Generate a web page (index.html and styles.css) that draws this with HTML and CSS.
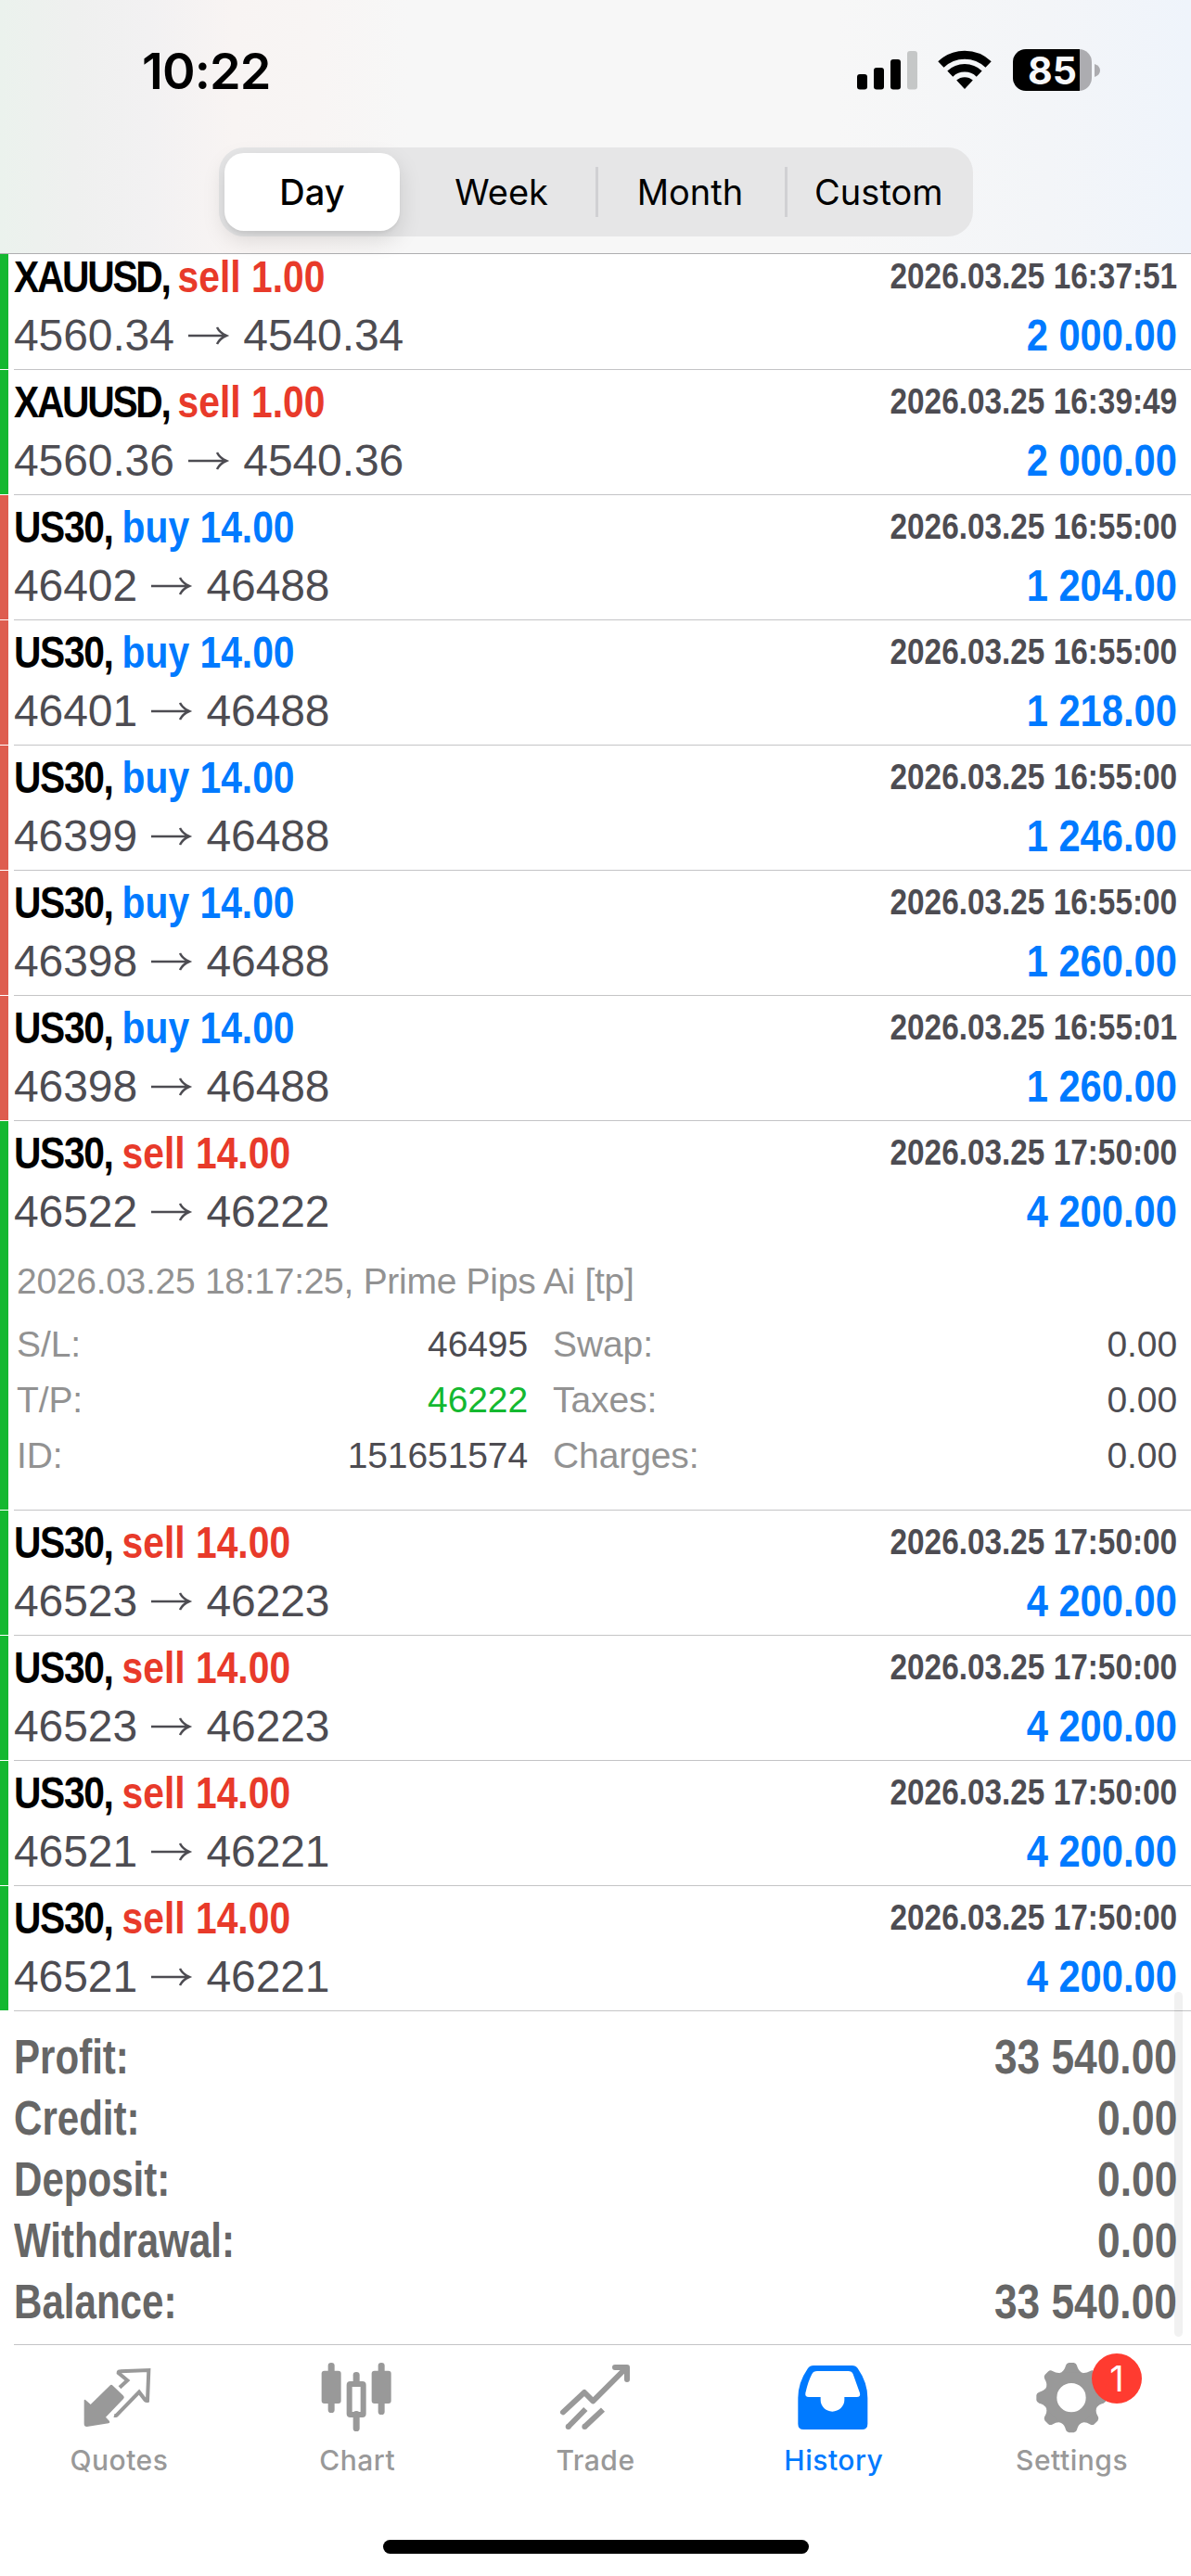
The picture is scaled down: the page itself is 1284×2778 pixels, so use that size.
FILE: index.html
```
<!DOCTYPE html>
<html lang="en">
<head>
  <meta charset="UTF-8">
  <title>History</title>
  <link rel="stylesheet" href="styles.css">
</head>
<body>

<header class="header">
  <div class="status-bar">
    <span class="clock">10:22</span>
    <div class="status-icons">
      <svg class="signal" viewBox="0 0 66 42">
        <rect x="0" y="25" width="11" height="16.5" rx="3"/>
        <rect x="18" y="18" width="11" height="23.5" rx="3"/>
        <rect x="36" y="9" width="11" height="32.5" rx="3"/>
        <rect x="54" y="0" width="11" height="41.5" rx="3" fill="#c5c7c7"/>
      </svg>
      <svg class="wifi" viewBox="0 0 58 42">
        <path d="M3.4 15.5A37 37 0 0 1 54.6 15.5" fill="none" stroke="#000" stroke-width="9"/>
        <path d="M13.3 25.6A22.7 22.7 0 0 1 44.7 25.6" fill="none" stroke="#000" stroke-width="8.6"/>
        <path d="M20.2 32.6A13 13 0 0 1 37.8 32.6L29 42z"/>
      </svg>
      <div class="battery"><span class="battery-level">85</span></div>
      <svg class="battery-nub" viewBox="0 0 6 14"><path d="M0 0Q6 2 6 7T0 14z" fill="#acacb0"/></svg>
    </div>
  </div>
  <div class="segments">
    <div class="segment active">Day</div>
    <div class="segment">Week</div>
    <div class="segment">Month</div>
    <div class="segment">Custom</div>
  </div>
</header>

<svg class="defs">
  <symbol id="arrow" viewBox="0 0 48 34">
    <path d="M2 18H42M33 9Q36 15 43 18Q36 21 33 27" fill="none" stroke="#4d4c52" stroke-width="2.5"/>
  </symbol>
</svg>

<main class="history">
  <ul class="trades">
    <li class="trade won">
      <div class="trade-body">
        <div class="line"><b class="title"><span class="metal">XAUUSD, </span><span class="sell">sell 1.00</span></b><b class="date">2026.03.25 16:37:51</b></div>
        <div class="line"><span class="prices">4560.34 <svg><use href="#arrow"/></svg> 4540.34</span><b class="profit">2 000.00</b></div>
      </div>
    </li>
    <li class="trade won">
      <div class="trade-body">
        <div class="line"><b class="title"><span class="metal">XAUUSD, </span><span class="sell">sell 1.00</span></b><b class="date">2026.03.25 16:39:49</b></div>
        <div class="line"><span class="prices">4560.36 <svg><use href="#arrow"/></svg> 4540.36</span><b class="profit">2 000.00</b></div>
      </div>
    </li>
    <li class="trade lost">
      <div class="trade-body">
        <div class="line"><b class="title"><span class="symbol">US30, </span><span class="buy">buy 14.00</span></b><b class="date">2026.03.25 16:55:00</b></div>
        <div class="line"><span class="prices">46402 <svg><use href="#arrow"/></svg> 46488</span><b class="profit">1 204.00</b></div>
      </div>
    </li>
    <li class="trade lost">
      <div class="trade-body">
        <div class="line"><b class="title"><span class="symbol">US30, </span><span class="buy">buy 14.00</span></b><b class="date">2026.03.25 16:55:00</b></div>
        <div class="line"><span class="prices">46401 <svg><use href="#arrow"/></svg> 46488</span><b class="profit">1 218.00</b></div>
      </div>
    </li>
    <li class="trade lost">
      <div class="trade-body">
        <div class="line"><b class="title"><span class="symbol">US30, </span><span class="buy">buy 14.00</span></b><b class="date">2026.03.25 16:55:00</b></div>
        <div class="line"><span class="prices">46399 <svg><use href="#arrow"/></svg> 46488</span><b class="profit">1 246.00</b></div>
      </div>
    </li>
    <li class="trade lost">
      <div class="trade-body">
        <div class="line"><b class="title"><span class="symbol">US30, </span><span class="buy">buy 14.00</span></b><b class="date">2026.03.25 16:55:00</b></div>
        <div class="line"><span class="prices">46398 <svg><use href="#arrow"/></svg> 46488</span><b class="profit">1 260.00</b></div>
      </div>
    </li>
    <li class="trade lost">
      <div class="trade-body">
        <div class="line"><b class="title"><span class="symbol">US30, </span><span class="buy">buy 14.00</span></b><b class="date">2026.03.25 16:55:01</b></div>
        <div class="line"><span class="prices">46398 <svg><use href="#arrow"/></svg> 46488</span><b class="profit">1 260.00</b></div>
      </div>
    </li>
    <li class="trade won open">
      <div class="trade-body">
        <div class="line"><b class="title"><span class="symbol">US30, </span><span class="sell">sell 14.00</span></b><b class="date">2026.03.25 17:50:00</b></div>
        <div class="line"><span class="prices">46522 <svg><use href="#arrow"/></svg> 46222</span><b class="profit">4 200.00</b></div>
        <p class="comment">2026.03.25 18:17:25, Prime Pips Ai [tp]</p>
        <div class="details">
          <span>S/L:</span><span class="value">46495</span><span class="second">Swap:</span><span class="value">0.00</span>
          <span>T/P:</span><span class="value hit">46222</span><span class="second">Taxes:</span><span class="value">0.00</span>
          <span>ID:</span><span class="value">151651574</span><span class="second">Charges:</span><span class="value">0.00</span>
        </div>
      </div>
    </li>
    <li class="trade won">
      <div class="trade-body">
        <div class="line"><b class="title"><span class="symbol">US30, </span><span class="sell">sell 14.00</span></b><b class="date">2026.03.25 17:50:00</b></div>
        <div class="line"><span class="prices">46523 <svg><use href="#arrow"/></svg> 46223</span><b class="profit">4 200.00</b></div>
      </div>
    </li>
    <li class="trade won">
      <div class="trade-body">
        <div class="line"><b class="title"><span class="symbol">US30, </span><span class="sell">sell 14.00</span></b><b class="date">2026.03.25 17:50:00</b></div>
        <div class="line"><span class="prices">46523 <svg><use href="#arrow"/></svg> 46223</span><b class="profit">4 200.00</b></div>
      </div>
    </li>
    <li class="trade won">
      <div class="trade-body">
        <div class="line"><b class="title"><span class="symbol">US30, </span><span class="sell">sell 14.00</span></b><b class="date">2026.03.25 17:50:00</b></div>
        <div class="line"><span class="prices">46521 <svg><use href="#arrow"/></svg> 46221</span><b class="profit">4 200.00</b></div>
      </div>
    </li>
    <li class="trade won">
      <div class="trade-body">
        <div class="line"><b class="title"><span class="symbol">US30, </span><span class="sell">sell 14.00</span></b><b class="date">2026.03.25 17:50:00</b></div>
        <div class="line"><span class="prices">46521 <svg><use href="#arrow"/></svg> 46221</span><b class="profit">4 200.00</b></div>
      </div>
    </li>
  </ul>

  <div class="summary">
    <div class="total"><b>Profit:</b><b class="sum">33 540.00</b></div>
    <div class="total"><b>Credit:</b><b class="sum">0.00</b></div>
    <div class="total"><b>Deposit:</b><b class="sum">0.00</b></div>
    <div class="total"><b>Withdrawal:</b><b class="sum">0.00</b></div>
    <div class="total"><b>Balance:</b><b class="sum">33 540.00</b></div>
  </div>
  <div class="scroll-thumb"></div>
</main>

<nav class="tab-bar">
  <div class="tab">
    <svg class="tab-icon" viewBox="10 0 270 270">
      <path d="M33 147Q33 141 38 145L54 159L116 98Q121 93 126 98L159 130Q165 136 160 141L103 200L115 213Q118 218 112 220L42 231Q33 231 33 222z"/>
      <path d="M148 104L173 81L144 57Q144 52 150 52L242 48L238 147Q234 148 231 145L211 119L138 194Q134 196 130 195" fill="none" stroke="#999" stroke-width="12"/>
    </svg>
    <span>Quotes</span>
  </div>
  <div class="tab">
    <svg class="tab-icon" viewBox="781 0 270 270">
      <rect x="822" y="24" width="21" height="162" rx="10"/>
      <rect x="801" y="50" width="63" height="106" rx="9"/>
      <rect x="903" y="54" width="21" height="45" rx="10"/>
      <rect x="903" y="180" width="21" height="66" rx="10"/>
      <rect x="891" y="93" width="45" height="99" rx="3" fill="none" stroke="#999" stroke-width="18" stroke-linejoin="round"/>
      <rect x="984" y="24" width="21" height="168" rx="10"/>
      <rect x="963" y="50" width="63" height="106" rx="9"/>
    </svg>
    <span>Chart</span>
  </div>
  <div class="tab">
    <svg class="tab-icon" viewBox="21 0 270 270" stroke="#999" stroke-width="18" stroke-linejoin="round">
      <g fill="none">
        <path d="M51 184L120 120L148 148L254 42M219 39H258V78" stroke-linecap="round"/>
        <path d="M68 231L124 174M121 231L180 176"/>
      </g>
      <g stroke="none"><circle cx="68" cy="231" r="9"/><circle cx="121" cy="231" r="9"/></g>
    </svg>
    <span>Trade</span>
  </div>
  <div class="tab active">
    <svg class="tab-icon" viewBox="791 0 270 270">
      <path fill-rule="evenodd" d="M860 33H985Q997 33 1003 42Q1035 88 1035 138V222Q1035 240 1017 240H828Q810 240 810 222V138Q810 88 842 42Q848 33 860 33zM872 51Q860 51 855 61Q843 83 834 122Q832 135 845 135H883V145C883 165 900 182 921 182S960 165 960 145V135H1000Q1013 135 1010 122L988 61Q984 51 972 51z"/>
    </svg>
    <span>History</span>
  </div>
  <div class="tab">
    <svg class="tab-icon" viewBox="0 0 270 270">
      <defs><path id="tooth" d="M-32 -82Q-22 -88 -18 -104Q-16 -112 -8 -113H8Q16 -112 18 -104Q22 -88 32 -82z"/></defs>
      <g transform="translate(132 137)">
        <circle r="67.5" fill="none" stroke="#999" stroke-width="41"/>
        <use href="#tooth"/>
        <use href="#tooth" transform="rotate(45)"/>
        <use href="#tooth" transform="rotate(90)"/>
        <use href="#tooth" transform="rotate(135)"/>
        <use href="#tooth" transform="rotate(180)"/>
        <use href="#tooth" transform="rotate(225)"/>
        <use href="#tooth" transform="rotate(270)"/>
        <use href="#tooth" transform="rotate(315)"/>
      </g>
    </svg>
    <span>Settings</span>
    <em class="badge">1</em>
  </div>
</nav>
<div class="home-indicator"></div>

</body>
</html>
```
FILE: styles.css
```
* {
  box-sizing: border-box;
}

body {
  margin: 0;
  width: 1284px;
  height: 2778px;
  overflow: hidden;
  background: #fff;
  font-family: 'Liberation Sans', Arial, sans-serif;
  display: flex;
  flex-direction: column;
}

.defs {
  display: none;
}

/* Header */
.header {
  height: 274px;
  flex: none;
  position: relative;
  z-index: 1;
  background: linear-gradient(90deg, #ebf2ed 0, #eff0ef 80px, #f2f1f2 160px, #f8f4f3 250px, #f8f5f4 340px, #f7f7f7 440px, #f7f7f7 900px, #f3f5f8 1130px, #eff4fb 1284px);
  border-bottom: 1px solid #aeaeb0;
  font-family: Inter, sans-serif;
}

.status-bar {
  height: 159px;
  padding: 0 98px 0 153px;
  display: flex;
  justify-content: space-between;
}

.clock {
  margin-top: 44px;
  font-size: 54px;
  line-height: 66px;
  font-weight: 600;
  letter-spacing: -0.9px;
}

.status-icons {
  display: flex;
  align-items: flex-start;
  padding-top: 53px;
}

.signal {
  width: 66px;
  height: 42px;
  margin: 2px 21.6px 0 0;
}

.wifi {
  width: 58px;
  height: 42px;
  margin: 1px 22.6px 0 0;
}

.battery {
  width: 85px;
  height: 45px;
  border-radius: 14px;
  background: linear-gradient(90deg, #000 72px, #acacb0 72px);
}

.battery-level {
  display: block;
  padding-left: 16px;
  color: #f7f8fa;
  font-size: 41px;
  line-height: 46px;
  font-weight: 700;
}

.battery-nub {
  width: 6px;
  height: 14px;
  margin: 16px 0 0 3px;
}

.segments {
  width: 813px;
  height: 96px;
  margin-left: 236px;
  padding: 6px 0;
  border-radius: 27px;
  background: #e6e6e7;
  display: flex;
}

.segment {
  width: 203.5px;
  height: 84px;
  display: flex;
  align-items: center;
  justify-content: center;
  font-size: 38px;
}

.segment + .segment + .segment {
  background: linear-gradient(#d0d0d3, #d0d0d3) 0 15px / 3px 54px no-repeat;
}

.segment.active {
  width: 189px;
  margin: 0 8px 0 6px;
  background: #fff;
  border-radius: 21px;
  font-weight: 500;
  box-shadow: 0 9px 24px rgba(0, 0, 0, 0.13), 0 3px 3px rgba(0, 0, 0, 0.04);
}

/* Trades */
.history {
  position: relative;
  height: 2254px;
  flex: none;
}

.trades {
  list-style: none;
  margin: -10px 0 0;
  padding: 0;
}

.trade {
  height: 135px;
  display: flex;
  gap: 6px;
}

.trade.open {
  height: 420px;
}

.trade::before {
  content: '';
  width: 9px;
  margin-bottom: 1px;
  background: #14b830;
}

.trade.lost::before {
  background: #de5d4f;
}

.trade-body {
  flex: 1;
  padding: 4px 15px 0 0;
  border-bottom: 1px solid #c4c4c6;
}

.line {
  height: 62px;
  line-height: 62px;
  display: flex;
  justify-content: space-between;
  font-size: 48px;
  color: #4d4c52;
  white-space: pre;
}

.line + .line {
  line-height: 64px;
}

/* bold text is set condensed */
.title {
  color: #000;
  transform: scaleX(0.85);
  transform-origin: left;
}

.metal {
  letter-spacing: -2.7px;
}

.symbol {
  letter-spacing: -1.6px;
}

.sell {
  color: #e83a2a;
}

.buy {
  color: #007aff;
}

.date {
  font-size: 39px;
  line-height: 60px;
  transform: scaleX(0.855);
  transform-origin: right;
}

.profit {
  color: #007aff;
  transform: scaleX(0.868);
  transform-origin: right;
}

.prices {
  letter-spacing: -0.1px;
}

.prices svg {
  width: 48px;
  height: 34px;
}

.comment {
  margin: 15px 0 0 3px;
  height: 60px;
  line-height: 60px;
  font-size: 39px;
  letter-spacing: -0.28px;
  color: #929292;
}

.details {
  margin: 8px 0 0 3px;
  display: grid;
  grid-template-columns: 170px 381px 220px 1fr;
  grid-auto-rows: 60px;
  line-height: 60px;
  font-size: 39px;
  letter-spacing: -0.1px;
  color: #929292;
}

.details .value {
  text-align: right;
  color: #4d4c52;
}

.details .second {
  padding-left: 27px;
}

.details .hit {
  color: #14b830;
}

/* Totals */
.summary {
  padding: 17px 15px 0 15px;
  font-size: 51px;
  line-height: 66px;
  color: #666;
}

.total {
  height: 66px;
  display: flex;
  justify-content: space-between;
}

.total b {
  transform: scaleX(0.825);
  transform-origin: left;
}

.total .sum {
  transform: scaleX(0.868);
  transform-origin: right;
}

.scroll-thumb {
  position: absolute;
  right: 9px;
  bottom: 8px;
  width: 9px;
  height: 372px;
  border-radius: 5px;
  background: rgba(0, 0, 0, 0.055);
}

/* Tab bar */
.tab-bar {
  flex: none;
  height: 211px;
  display: flex;
  background: linear-gradient(#c4c4c6, #c4c4c6) 15px 0 / 100% 1px no-repeat;
  font-family: Inter, sans-serif;
}

.tab {
  flex: 1;
  position: relative;
  padding-top: 12px;
  display: flex;
  flex-direction: column;
  align-items: center;
  font-size: 30px;
  font-weight: 500;
  letter-spacing: 0.5px;
  line-height: 36px;
  color: #999;
  fill: #999;
}

.tab.active {
  color: #007aff;
  fill: #007aff;
}

.tab-icon {
  width: 90px;
  height: 90px;
  margin-bottom: 5px;
}

.badge {
  position: absolute;
  left: 150px;
  top: 10px;
  width: 54px;
  height: 54px;
  border-radius: 50%;
  background: #ff3b30;
  color: #fff;
  font-size: 38px;
  font-style: normal;
  font-weight: 400;
  line-height: 54px;
  text-align: center;
}

.home-indicator {
  width: 459px;
  height: 15px;
  margin: 0 auto;
  border-radius: 8px;
  background: #000;
}
```
